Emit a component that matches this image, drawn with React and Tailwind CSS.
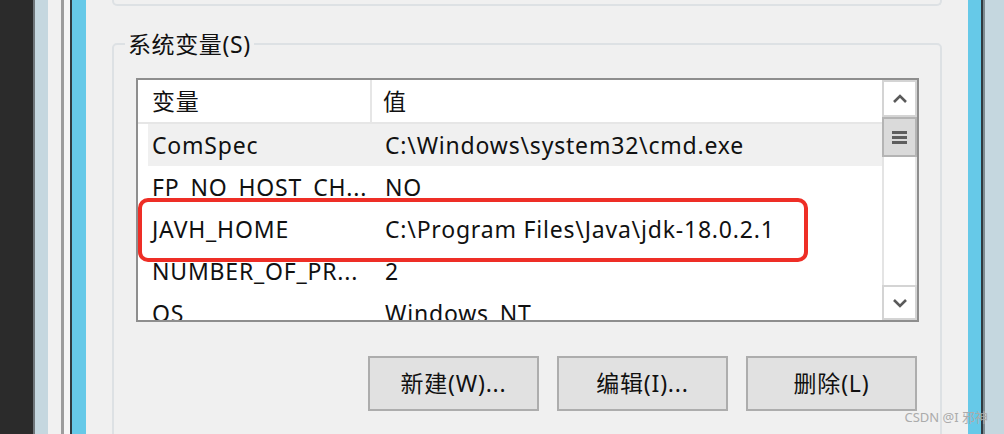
const rows = [
  { name: 'ComSpec', value: 'C:\\Windows\\system32\\cmd.exe', hot: true },
  { name: 'FP_NO_HOST_CH...', value: 'NO' },
  { name: 'JAVH_HOME', value: 'C:\\Program Files\\Java\\jdk-18.0.2.1' },
  { name: 'NUMBER_OF_PR...', value: '2' },
  { name: 'OS', value: 'Windows_NT' },
];

function ListRow({ name, value, hot }) {
  return (
    <div className="h-[42px] shrink-0 flex">
      <div className={hot ? 'flex-1 flex items-center ml-[10px] bg-[#f0f0f0]' : 'flex-1 flex items-center'}>
        <div className={hot ? 'w-[224px] pl-[4px] whitespace-nowrap overflow-hidden' : 'w-[234px] pl-[14px] whitespace-nowrap overflow-hidden'}>
          {name}
        </div>
        <div className="pl-[13px] whitespace-nowrap">{value}</div>
      </div>
    </div>
  );
}

function ScrollBar() {
  return (
    <div className="w-[35px] flex flex-col bg-white">
      <div className="h-[37px] border-2 border-[#d4d4d4] flex items-center justify-center">
        <svg width="16" height="10" viewBox="0 0 16 10">
          <path d="M2 8 L8 2 L14 8" fill="none" stroke="#5a5a5a" strokeWidth="2.6" />
        </svg>
      </div>
      <div className="h-[40px] bg-[#dadada] border-2 border-[#b4b4b4] flex flex-col items-center justify-center gap-[2px]">
        <div className="w-[15px] h-[3px] bg-[#5e5e5e]" />
        <div className="w-[15px] h-[3px] bg-[#5e5e5e]" />
        <div className="w-[15px] h-[3px] bg-[#5e5e5e]" />
      </div>
      <div className="flex-1 border-x-2 border-[#e4e4e4]" />
      <div className="h-[35px] border-2 border-[#d4d4d4] flex items-center justify-center">
        <svg width="16" height="10" viewBox="0 0 16 10">
          <path d="M2 2 L8 8 L14 2" fill="none" stroke="#5a5a5a" strokeWidth="2.6" />
        </svg>
      </div>
    </div>
  );
}

export default function App() {
  return (
    <div className="relative w-[1004px] h-[434px] overflow-hidden flex bg-[#f0f0f0] text-[#111] font-['Noto_Sans','Noto_Sans_CJK_SC',sans-serif]">
      {/* left window edges */}
      <div className="w-[33px] bg-[#2b2b2b]" />
      <div className="w-[2px] bg-[#6f767a]" />
      <div className="w-[13px] bg-[#c5d7df]" />
      <div className="w-[13px] bg-[#f1f1f1]" />
      <div className="w-[3px] bg-[#9d9d9d]" />
      <div className="w-[6px] bg-[#f6f6f6]" />
      <div className="w-[2px] bg-[#2f3a40]" />
      <div className="w-[14px] bg-[#66c9e8]" />

      <main className="flex-1 px-[26px]">
        <div className="h-[6px] border-2 border-t-0 border-[#dde1e4] rounded-b-[5px]" />

        <fieldset className="mt-[24px] border-2 border-[#dde1e4] rounded-[5px] pl-[22px] pr-[21px] pt-[20px] pb-[40px]">
          <legend className="-ml-[11px] px-[3px] text-[23px] leading-[28px] tracking-[0.6px]">系统变量(S)</legend>

          <div className="h-[244px] border-2 border-[#8e8e8e] bg-white flex overflow-hidden text-[23px] tracking-[0.8px]">
            <div className="flex-1 flex flex-col overflow-hidden">
              <div className="h-[44px] shrink-0 flex border-b-2 border-[#e6e6e6]">
                <div className="w-[234px] pl-[14px] flex items-center border-r-2 border-[#e6e6e6]">变量</div>
                <div className="pl-[11px] flex items-center">值</div>
              </div>
              {rows.map((r) => (
                <ListRow key={r.name} {...r} />
              ))}
            </div>
            <ScrollBar />
          </div>

          <div className="mt-[34px] pr-[2px] flex justify-end gap-[18px] text-[23px] tracking-[0.8px]">
            <button className="w-[171px] h-[55px] bg-[#e1e1e1] border-2 border-[#adadad]">新建(W)...</button>
            <button className="w-[171px] h-[55px] bg-[#e1e1e1] border-2 border-[#adadad]">编辑(I)...</button>
            <button className="w-[171px] h-[55px] bg-[#e1e1e1] border-2 border-[#adadad]">删除(L)</button>
          </div>
        </fieldset>
      </main>

      {/* right window edges */}
      <div className="w-[13px] bg-[#66c9e8]" />
      <div className="w-[2px] bg-[#2f3a40]" />
      <div className="w-[2px] bg-[#7c8a90]" />
      <div className="w-[19px] bg-[#c5d7df]" />

      {/* annotation */}
      <div className="absolute left-[138px] top-[198px] w-[670px] h-[64px] border-4 border-[#ee2e26] rounded-[10px]" />

      <div className="absolute right-[16px] bottom-[9px] text-[13px] leading-[15px] text-[#ababab]">CSDN @I 邪神</div>
    </div>
  );
}
